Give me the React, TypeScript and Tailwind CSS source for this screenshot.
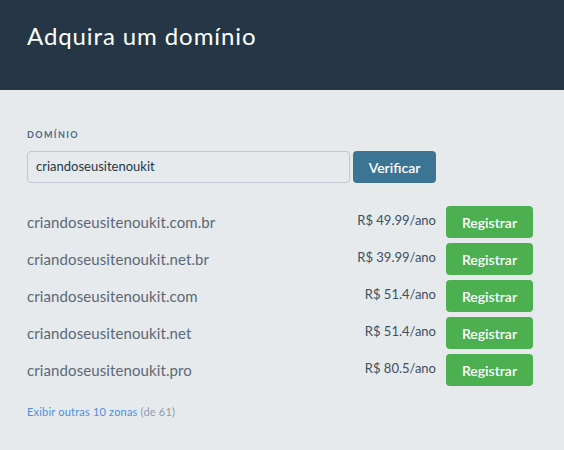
const domains = [
  { name: "criandoseusitenoukit.com.br", price: "R$ 49.99/ano" },
  { name: "criandoseusitenoukit.net.br", price: "R$ 39.99/ano" },
  { name: "criandoseusitenoukit.com", price: "R$ 51.4/ano" },
  { name: "criandoseusitenoukit.net", price: "R$ 51.4/ano" },
  { name: "criandoseusitenoukit.pro", price: "R$ 80.5/ano" },
];

const App = () => {
  return (
    <div className="w-[564px] h-[450px] bg-[#e6eaed] font-['Lato','Open_Sans',sans-serif]">
      <div className="h-[90px] bg-[#253746] px-[27px] pt-[21px]">
        <h1 className="text-[24px] leading-[30px] tracking-[0.9px] text-white">
          Adquira um domínio
        </h1>
      </div>

      <div className="px-[27px] pt-[40px]">
        <p className="text-[9px] font-bold tracking-[1.4px] text-[#4d6b84] leading-[10px]">
          DOMÍNIO
        </p>

        <div className="flex gap-[3px] mt-[11px]">
          <div className="w-[323px] h-[32px] rounded-[4px] border border-[#bfc8d0] flex items-center px-[8px] text-[13px] text-[#263746]">
            criandoseusitenoukit
          </div>
          <button className="w-[83px] h-[32px] rounded-[4px] bg-[#3b7593] text-white text-[14px] font-semibold">
            Verificar
          </button>
        </div>

        <div className="flex flex-col gap-[5px] mt-[23px] w-[506px]">
          {domains.map((d) => (
            <div key={d.name} className="flex items-center h-[32px]">
              <p className="flex-1 text-[15px] tracking-[0.1px] text-[#5b6875]">{d.name}</p>
              <p className="text-[13px] text-[#3d5063] mr-[10px] -mt-[3px]">{d.price}</p>
              <button className="w-[87px] h-[32px] rounded-[4px] bg-[#4caf50] text-white text-[14px] font-semibold">
                Registrar
              </button>
            </div>
          ))}
        </div>

        <p className="mt-[18px] text-[11px] tracking-[0.2px] text-[#4a8fe0]">
          Exibir outras 10 zonas <span className="text-[#8d9cab]">(de 61)</span>
        </p>
      </div>
    </div>
  );
};

export default App;
